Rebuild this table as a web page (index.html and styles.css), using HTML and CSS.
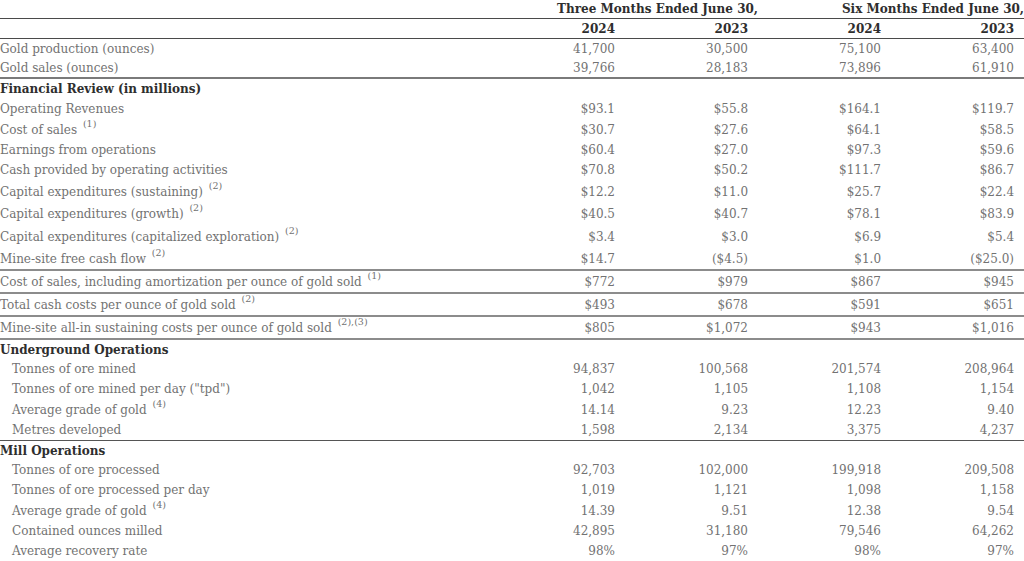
FILE: index.html
```html
<!DOCTYPE html>
<html lang="en">
<head>
<meta charset="utf-8">
<title>Operating Highlights</title>
<link rel="stylesheet" href="styles.css">
</head>
<body>
<table class="fin">
  <colgroup>
    <col class="c-label">
    <col class="c-num"><col class="c-num"><col class="c-num"><col class="c-num">
  </colgroup>
  <thead>
    <tr class="h1">
      <th></th>
      <th colspan="2" class="period">Three Months Ended June 30,</th>
      <th colspan="2" class="period">Six Months Ended June 30,</th>
    </tr>
    <tr class="h2">
      <th></th>
      <th class="yr">2024</th><th class="yr">2023</th><th class="yr">2024</th><th class="yr">2023</th>
    </tr>
  </thead>
  <tbody>
    <tr><td>Gold production (ounces)</td><td>41,700</td><td>30,500</td><td>75,100</td><td>63,400</td></tr>
    <tr class="rule short"><td>Gold sales (ounces)</td><td>39,766</td><td>28,183</td><td>73,896</td><td>61,910</td></tr>

    <tr class="section"><td colspan="5">Financial Review (in millions)</td></tr>
    <tr><td>Operating Revenues</td><td>$93.1</td><td>$55.8</td><td>$164.1</td><td>$119.7</td></tr>
    <tr class="fn"><td>Cost of sales <sup>(1)</sup></td><td>$30.7</td><td>$27.6</td><td>$64.1</td><td>$58.5</td></tr>
    <tr><td>Earnings from operations</td><td>$60.4</td><td>$27.0</td><td>$97.3</td><td>$59.6</td></tr>
    <tr><td>Cash provided by operating activities</td><td>$70.8</td><td>$50.2</td><td>$111.7</td><td>$86.7</td></tr>
    <tr class="fn-lg"><td>Capital expenditures (sustaining) <sup>(2)</sup></td><td>$12.2</td><td>$11.0</td><td>$25.7</td><td>$22.4</td></tr>
    <tr class="fn-lg"><td>Capital expenditures (growth) <sup>(2)</sup></td><td>$40.5</td><td>$40.7</td><td>$78.1</td><td>$83.9</td></tr>
    <tr class="fn-xl"><td>Capital expenditures (capitalized exploration) <sup>(2)</sup></td><td>$3.4</td><td>$3.0</td><td>$6.9</td><td>$5.4</td></tr>
    <tr class="fn-lg rule2"><td>Mine-site free cash flow <sup>(2)</sup></td><td>$14.7</td><td>($4.5)</td><td>$1.0</td><td>($25.0)</td></tr>
    <tr class="fn rule2"><td>Cost of sales, including amortization per ounce of gold sold <sup>(1)</sup></td><td>$772</td><td>$979</td><td>$867</td><td>$945</td></tr>
    <tr class="fn rule2"><td>Total cash costs per ounce of gold sold <sup>(2)</sup></td><td>$493</td><td>$678</td><td>$591</td><td>$651</td></tr>
    <tr class="fn rule2"><td>Mine-site all-in sustaining costs per ounce of gold sold <sup>(2),(3)</sup></td><td>$805</td><td>$1,072</td><td>$943</td><td>$1,016</td></tr>

    <tr class="section tight"><td colspan="5">Underground Operations</td></tr>
    <tr class="sub"><td>Tonnes of ore mined</td><td>94,837</td><td>100,568</td><td>201,574</td><td>208,964</td></tr>
    <tr class="sub"><td>Tonnes of ore mined per day ("tpd")</td><td>1,042</td><td>1,105</td><td>1,108</td><td>1,154</td></tr>
    <tr class="sub fn"><td>Average grade of gold <sup>(4)</sup></td><td>14.14</td><td>9.23</td><td>12.23</td><td>9.40</td></tr>
    <tr class="sub rule1"><td>Metres developed</td><td>1,598</td><td>2,134</td><td>3,375</td><td>4,237</td></tr>

    <tr class="section tight"><td colspan="5">Mill Operations</td></tr>
    <tr class="sub"><td>Tonnes of ore processed</td><td>92,703</td><td>102,000</td><td>199,918</td><td>209,508</td></tr>
    <tr class="sub"><td>Tonnes of ore processed per day</td><td>1,019</td><td>1,121</td><td>1,098</td><td>1,158</td></tr>
    <tr class="sub fn"><td>Average grade of gold <sup>(4)</sup></td><td>14.39</td><td>9.51</td><td>12.38</td><td>9.54</td></tr>
    <tr class="sub"><td>Contained ounces milled</td><td>42,895</td><td>31,180</td><td>79,546</td><td>64,262</td></tr>
    <tr class="sub rule1"><td>Average recovery rate</td><td>98%</td><td>97%</td><td>98%</td><td>97%</td></tr>
  </tbody>
</table>
</body>
</html>
```

FILE: styles.css
```css
html, body {
  margin: 0;
  padding: 0;
  background: #ffffff;
}

body {
  font-family: "DejaVu Serif", "Liberation Serif", serif;
  font-size: 12px;
  color: #727272;
}

.fin {
  width: 1024px;
  border-collapse: collapse;
  table-layout: fixed;
}

.c-label { width: 492px; }
.c-num { width: 133px; }

.fin th,
.fin td {
  padding: 0;
  height: 20px;
  line-height: 18px;
  white-space: nowrap;
  vertical-align: middle;
}

.fin td { text-align: right; padding-right: 10px; }
.fin td:first-child { text-align: left; padding-right: 0; }

.fin th {
  font-weight: bold;
  color: #2e2e2e;
  text-align: right;
}

.h1 th { height: 18px; border-bottom: 1px solid #4a4a4a; }
.h1 .period { padding-right: 0; }
.h2 th { height: 19px; border-bottom: 1px solid #4a4a4a; }
.h2 .yr { padding-right: 10px; }

.section td {
  font-weight: bold;
  color: #2e2e2e;
  text-align: left;
}

.fin .tight td { height: 19px; }

.sub td:first-child { padding-left: 12px; }

.fin .fn td { height: 20px; padding-top: 1px; }
.fin .fn-lg td { height: 21px; padding-top: 1px; }
.fin .fn-xl td { height: 21px; padding-top: 2px; }

.fin .short td { height: 18px; }

.rule td { border-bottom: 2px solid #7a7a7a; }
.rule1 td { border-bottom: 1px solid #555555; }
.rule2 td { border-bottom: 2px solid #8c8c8c; }

sup {
  font-size: 9.5px;
  line-height: 0;
  vertical-align: 7px;
  margin-left: 2px;
}
```
